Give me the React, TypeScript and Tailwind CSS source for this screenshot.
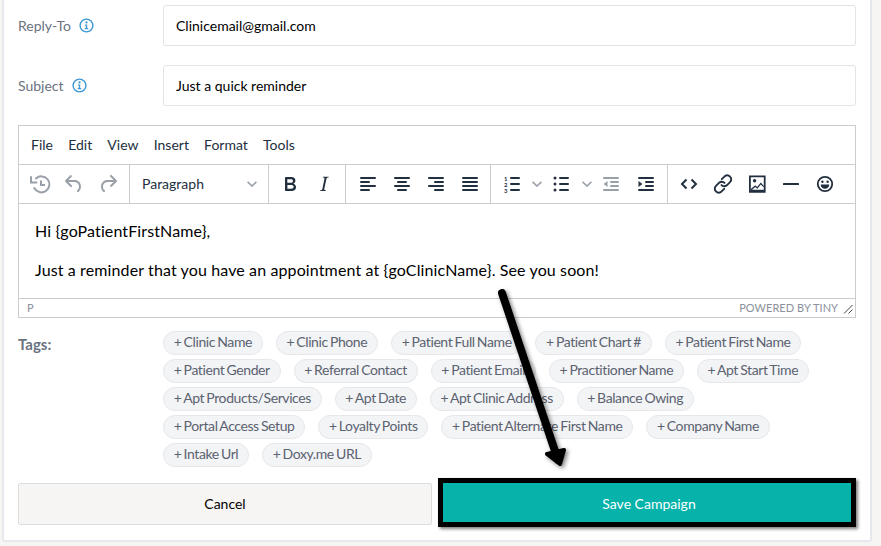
const tags = [
  ["Clinic Name", "Clinic Phone", "Patient Full Name", "Patient Chart #", "Patient First Name"],
  ["Patient Gender", "Referral Contact", "Patient Email", "Practitioner Name", "Apt Start Time"],
  ["Apt Products/Services", "Apt Date", "Apt Clinic Address", "Balance Owing"],
  ["Portal Access Setup", "Loyalty Points", "Patient Alternate First Name", "Company Name"],
  ["Intake Url", "Doxy.me URL"],
];

const menus = ["File", "Edit", "View", "Insert", "Format", "Tools"];

function InfoIcon() {
  return (
    <svg width="15" height="15" viewBox="0 0 15 15" className="text-[#3b97d3]">
      <circle cx="7.5" cy="7.5" r="6.4" fill="none" stroke="currentColor" strokeWidth="1.4" />
      <circle cx="7.5" cy="4.4" r="1.1" fill="currentColor" />
      <path d="M5.9 6.4h2.3v3.7h1v1.2H5.8v-1.2h1V7.6h-.9z" fill="currentColor" />
    </svg>
  );
}

function Icon({ children, muted }: { children: React.ReactNode; muted?: boolean }) {
  return (
    <svg width="24" height="24" viewBox="0 0 24 24" fill="currentColor" className={muted ? "text-[#9aa0a8]" : "text-[#222f3e]"}>
      {children}
    </svg>
  );
}

function Chevron() {
  return (
    <svg width="10" height="6" viewBox="0 0 10 6" fill="none" stroke="#9aa0a8" strokeWidth="1.6">
      <path d="M.6.8 5 5 9.4.8" />
    </svg>
  );
}

function Lines({ rows }: { rows: [number, number, number][] }) {
  return (
    <>
      {rows.map(([x, y, w]) => (
        <rect key={y} x={x} y={y} width={w} height="2" rx="1" />
      ))}
    </>
  );
}

function Group({ children, className }: { children: React.ReactNode; className: string }) {
  return <div className={`flex h-full items-center border-r border-[#cccccc] ${className}`}>{children}</div>;
}

function Toolbar() {
  return (
    <div className="flex h-[39px] items-center border-b border-[#cccccc]">
      <Group className="w-[111px] pl-[9px] gap-[10px]">
        <Icon muted>
          <path d="M8 6.5A8 8 0 1 1 6.3 16" fill="none" stroke="currentColor" strokeWidth="2" strokeLinecap="round" />
          <path d="M3 5v5.5h5.5" fill="none" stroke="currentColor" strokeWidth="2" strokeLinecap="round" />
          <path d="M13 8.5v4.5h4" fill="none" stroke="currentColor" strokeWidth="2" />
        </Icon>
        <Icon muted>
          <path d="M6.4 8H12c3.7 0 6.2 2 6.8 5.1.6 2.7-.4 5.6-2.3 6.8a1 1 0 0 1-1-1.8c1.1-.6 1.8-2.7 1.4-4.6-.5-2.1-2.1-3.5-4.9-3.5H6.4l3.3 3.3a1 1 0 1 1-1.4 1.4l-5-5a1 1 0 0 1 0-1.4l5-5a1 1 0 0 1 1.4 1.4L6.4 8z" />
        </Icon>
        <Icon muted>
          <path d="M17.6 10H12c-2.8 0-4.4 1.4-4.9 3.5-.4 2 .3 4 1.4 4.6a1 1 0 1 1-1 1.8c-2-1.2-2.9-4.1-2.3-6.8.6-3 3-5.1 6.8-5.1h5.6l-3.3-3.3a1 1 0 1 1 1.4-1.4l5 5a1 1 0 0 1 0 1.4l-5 5a1 1 0 0 1-1.4-1.4l3.3-3.3z" />
        </Icon>
      </Group>
      <Group className="w-[139px] justify-between pl-[12px] pr-[11px]">
        <span className="pb-[2px] text-[14px] text-[#222f3e]">Paragraph</span>
        <Chevron />
      </Group>
      <Group className="w-[77px] pl-[9px] gap-[10px]">
        <Icon>
          <path d="M7.8 19c-.3 0-.5 0-.6-.2l-.2-.5V5.7c0-.2 0-.4.2-.5l.6-.2h5c1.5 0 2.7.3 3.5 1 .7.6 1.1 1.4 1.1 2.5a3 3 0 0 1-.6 1.9c-.4.6-1 1-1.6 1.2.4.1.9.3 1.3.6s.8.7 1 1.2c.4.4.5 1 .5 1.6 0 1.3-.4 2.3-1.3 3-.8.7-2.1 1-3.8 1H7.8zm5-8.3c.6 0 1.2-.1 1.6-.5.4-.3.6-.7.6-1.3 0-1.1-.8-1.7-2.3-1.7H9.3v3.5h3.4zm.5 6c.7 0 1.3-.1 1.7-.4.4-.4.6-.9.6-1.5s-.2-1-.7-1.4c-.4-.3-1-.4-2-.4H9.4v3.8h4z" />
        </Icon>
        <Icon>
          <path d="M16.7 4.7l-.1.9h-.3c-.6 0-1 0-1.4.3-.3.3-.4.6-.5 1.1l-2.1 9.8v.6c0 .5.4.8 1.4.8h.2l-.2.8H8l.2-.8h.2c1.1 0 1.8-.5 2-1.5l2-9.8.1-.5c0-.6-.4-.8-1.4-.8h-.3l.2-.9h5.8z" />
        </Icon>
      </Group>
      <Group className="w-[145px] pl-[10px] gap-[10px]">
        <Icon><Lines rows={[[4, 5, 16], [4, 9, 10], [4, 13, 16], [4, 17, 10]]} /></Icon>
        <Icon><Lines rows={[[4, 5, 16], [7, 9, 10], [4, 13, 16], [7, 17, 10]]} /></Icon>
        <Icon><Lines rows={[[4, 5, 16], [10, 9, 10], [4, 13, 16], [10, 17, 10]]} /></Icon>
        <Icon><Lines rows={[[4, 5, 16], [4, 9, 16], [4, 13, 16], [4, 17, 16]]} /></Icon>
      </Group>
      <Group className="w-[177px] pl-[9px]">
        <Icon>
          <Lines rows={[[10, 5, 10], [10, 11, 10], [10, 17, 10]]} />
          <text x="4" y="8.5" fontSize="6" fontWeight="700" fontFamily="Lato, sans-serif">1</text>
          <text x="4" y="14.5" fontSize="6" fontWeight="700" fontFamily="Lato, sans-serif">2</text>
          <text x="4" y="20.5" fontSize="6" fontWeight="700" fontFamily="Lato, sans-serif">3</text>
        </Icon>
        <span className="ml-[8px] mr-[7px] flex"><Chevron /></span>
        <Icon>
          <Lines rows={[[10, 5, 10], [10, 11, 10], [10, 17, 10]]} />
          <circle cx="6" cy="6" r="1.5" />
          <circle cx="6" cy="12" r="1.5" />
          <circle cx="6" cy="18" r="1.5" />
        </Icon>
        <span className="ml-[9px] mr-[7px] flex"><Chevron /></span>
        <Icon muted>
          <Lines rows={[[4, 5, 16], [11, 9, 9], [11, 13, 9], [4, 17, 16]]} />
          <path d="M8.5 9v6L4.6 12z" />
        </Icon>
        <span className="ml-[11px] flex">
          <Icon>
            <Lines rows={[[4, 5, 16], [11, 9, 9], [11, 13, 9], [4, 17, 16]]} />
            <path d="M4.5 9v6L8.4 12z" />
          </Icon>
        </span>
      </Group>
      <div className="flex items-center gap-[10px] pl-[9px]">
        <Icon>
          <path d="M9.5 7.5 5 12l4.5 4.5M14.5 7.5 19 12l-4.5 4.5" fill="none" stroke="currentColor" strokeWidth="2" />
        </Icon>
        <Icon>
          <path d="M10.8 7.2 13.4 4.6a3.7 3.7 0 0 1 5.6 0 3.7 3.7 0 0 1 0 5.5l-3.2 3.2a3.7 3.7 0 0 1-5.3-.2M13.2 16.8l-2.6 2.6a3.7 3.7 0 0 1-5.6 0 3.7 3.7 0 0 1 0-5.5l3.2-3.2a3.7 3.7 0 0 1 5.3.2" fill="none" stroke="currentColor" strokeWidth="1.9" strokeLinecap="round" />
        </Icon>
        <Icon>
          <path fillRule="evenodd" d="M4 3.5h16.6v17.2H4zM5.8 5.3v13.6h13V5.3z" />
          <circle cx="9.6" cy="8.8" r="1.7" />
          <path d="m5.8 17 4.4-3.8 2 1.7 3.6-4.4 3 3.4v1.6l-3-3.1-3.4 4.3-2.2-1.8-3.2 2.8h12v1.2H5.8z" />
        </Icon>
        <Icon><rect x="4" y="11" width="16" height="2" rx=".6" /></Icon>
        <Icon>
          <circle cx="12" cy="12" r="7.2" fill="none" stroke="currentColor" strokeWidth="1.8" />
          <circle cx="9.4" cy="9.8" r="1.2" />
          <circle cx="14.6" cy="9.8" r="1.2" />
          <path d="M7.7 12.6h8.6c0 2.7-1.9 4.2-4.3 4.2s-4.3-1.5-4.3-4.2z" />
        </Icon>
      </div>
    </div>
  );
}

function Field({ label, value }: { label: string; value: string }) {
  return (
    <div className="flex items-center">
      <div className="flex w-[145px] items-center gap-[8px] text-[14px] text-[#6b7280]">
        <span>{label}</span>
        <InfoIcon />
      </div>
      <div className="flex h-[41px] flex-1 items-center rounded-[3px] border border-[#e3e3e3] bg-white px-[12px] text-[14px] text-black">
        {value}
      </div>
    </div>
  );
}

export default function App() {
  return (
    <div className="relative h-[546px] w-[881px] overflow-hidden bg-[#f6f5f3] font-['Lato',sans-serif]">
      <div className="ml-[2px] w-[870px] rounded-b-[3px] border-x-2 border-b-2 border-[#e5e8ec] bg-white pl-[14px] pr-[14px] pt-[5px] pb-[13px]">
        <div className="flex flex-col gap-[19px]">
          <Field label="Reply-To" value="Clinicemail@gmail.com" />
          <Field label="Subject" value="Just a quick reminder" />
        </div>

        <div className="mt-[19px] border border-[#cccccc] text-[#222f3e]">
          <div className="flex h-[39px] items-center gap-[15.2px] border-b border-[#cccccc] pb-[2px] pl-[12px] text-[14px]">
            {menus.map((m) => (
              <span key={m}>{m}</span>
            ))}
          </div>
          <Toolbar />
          <div className="h-[95px] border-b border-[#cccccc] px-[16px] pt-[16px] text-[16px] leading-[22px] tracking-[0.12px] text-black">
            <p>Hi {"{goPatientFirstName}"},</p>
            <p className="mt-[17px]">Just a reminder that you have an appointment at {"{goClinicName}"}. See you soon!</p>
          </div>
          <div className="flex h-[18px] items-center justify-between pl-[8px] pr-[2px] pt-[1px] text-[11px] text-[#8a919b]">
            <span>P</span>
            <div className="flex items-center gap-[5px]">
              <span className="tracking-[0.05px]">POWERED BY TINY</span>
              <svg width="10" height="10" viewBox="0 0 10 10" stroke="#444" strokeWidth="1" fill="none">
                <path d="M1 9.5 9.5 1M5.5 9.5 9.5 5.5" />
              </svg>
            </div>
          </div>
        </div>

        <div className="mt-[13px] flex">
          <div className="w-[145px] pt-[2px] text-[15px] font-bold text-[#6b7280]">Tags:</div>
          <div className="flex flex-1 flex-col gap-[4px]">
            {tags.map((row) => (
              <div key={row[0]} className="flex gap-[13px]">
                {row.map((t) => (
                  <span key={t} className="flex h-[24px] items-center whitespace-pre rounded-full border border-[#e5e7eb] bg-[#f3f4f6] px-[9.7px] pb-[3px] text-[14px] tracking-[-0.4px] [word-spacing:-1px] text-[#5b6270]">
                    + {t}
                  </span>
                ))}
              </div>
            ))}
          </div>
        </div>

        <div className="mt-[11px] flex items-start gap-[6px]">
          <button className="mt-[5px] h-[42px] w-[414px] rounded-[2px] border border-[#dddddd] bg-[#f6f5f3] pb-[2px] text-[14px] text-black">Cancel</button>
          <button className="h-[49px] w-[418px] border-[5px] border-black bg-[#05b3ab] pl-[4px] pt-[2px] text-[14px] text-white shadow-[2px_2px_3px_rgba(0,0,0,0.5)]">Save Campaign</button>
        </div>
      </div>

      <svg width="881" height="546" viewBox="0 0 881 546" fill="none" className="absolute left-0 top-0 drop-shadow-[2px_2px_2px_rgba(0,0,0,0.5)]">
        <path d="M502 293 558 460" stroke="#000" strokeWidth="8" strokeLinecap="round" />
        <path d="M547 454 560 464 564 450z" fill="#000" stroke="#000" strokeWidth="4" strokeLinejoin="round" />
      </svg>
    </div>
  );
}
